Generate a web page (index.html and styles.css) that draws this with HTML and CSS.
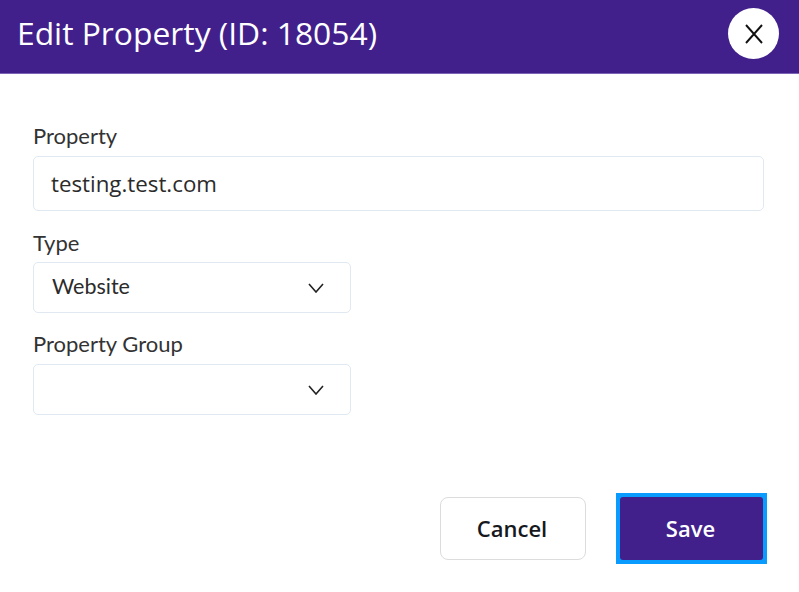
FILE: index.html
```html
<!DOCTYPE html>
<html lang="en">

<head>
    <meta charset="UTF-8">
    <title>Edit Property</title>
    <link rel="stylesheet" href="styles.css">
</head>

<body>
    <header class="modal-header">
        <h1>Edit Property (ID: 18054)</h1>
        <button type="button" class="close-btn" aria-label="Close">
            <svg width="18" height="20" viewBox="0 0 18 20"><path d="M1 1L17 19M17 1L1 19" fill="none" stroke="#111" stroke-width="1.900"/></svg>
        </button>
    </header>
    <form class="modal-body">
        <div class="form-group">
            <label>Property</label>
            <div class="text-input">testing.test.com</div>
        </div>
        <div class="form-group">
            <label>Type</label>
            <div class="select-input">
                <span>Website</span>
                <svg width="16" height="10" viewBox="0 0 16 10"><path d="M1 1L8 9L15 1" fill="none" stroke="#222" stroke-width="1.6"/></svg>
            </div>
        </div>
        <div class="form-group group-last">
            <label>Property Group</label>
            <div class="select-input">
                <span></span>
                <svg width="16" height="10" viewBox="0 0 16 10"><path d="M1 1L8 9L15 1" fill="none" stroke="#222" stroke-width="1.6"/></svg>
            </div>
        </div>
        <div class="actions">
            <button type="button" class="btn btn-cancel">Cancel</button>
            <div class="focus-ring">
                <button type="button" class="btn btn-save">Save</button>
            </div>
        </div>
    </form>
</body>

</html>
```

FILE: styles.css
```css
* {
    box-sizing: border-box;
}

body {
    margin: 0;
    background-color: #fff;
    font-family: "Open Sans", sans-serif;
    color: #2b2b2b;
}

.modal-header {
    height: 74px;
    padding: 8px 20px 0 17px;
    display: flex;
    justify-content: space-between;
    align-items: flex-start;
    background-color: #42208c;
    border-bottom: 1px solid #7d63b5;
}

h1 {
    margin: 0;
    padding-top: 4px;
    font-size: 31.800px;
    line-height: 42px;
    font-weight: 400;
    color: #fff;
}

.close-btn {
    width: 51px;
    height: 51px;
    padding: 0;
    border: none;
    border-radius: 50%;
    background: #fff;
    display: flex;
    align-items: center;
    justify-content: center;
}

.modal-body {
    padding: 49px 35px 0 33px;
}

.form-group {
    margin-bottom: 19px;
}

label {
    display: block;
    height: 33px;
    font-family: Lato, sans-serif;
    font-size: 22px;
    line-height: 26px;
    color: #333;
}

.text-input {
    height: 55px;
    padding-left: 17px;
    border: 1px solid #e0e8f1;
    border-radius: 5px;
    font-size: 22.300px;
    line-height: 54px;
}

.form-group + .form-group label {
    height: 32px;
}

.form-group.group-last label {
    line-height: 24px;
}

.select-input {
    width: 318px;
    height: 51px;
    padding: 0 26px 3px 18px;
    border: 1px solid #e0e8f1;
    border-radius: 5px;
    display: flex;
    justify-content: space-between;
    align-items: center;
    font-family: Lato, sans-serif;
    font-size: 21.5px;
}

.select-input svg {
    margin-top: 3px;
}

.actions {
    margin: 78px -3px 0 0;
    display: flex;
    justify-content: flex-end;
    align-items: center;
    gap: 30px;
}

.btn {
    height: 63px;
    padding: 0 2px 2px 0;
    font-family: "Open Sans", sans-serif;
    font-size: 22px;
    font-weight: 600;
    border-radius: 8px;
}

.btn-cancel {
    width: 146px;
    background: #fff;
    color: #16181d;
    border: 1px solid #dcdcdc;
}

.focus-ring {
    padding: 4px;
    background: #0a9bff;
    display: flex;
}

.btn-save {
    width: 143px;
    background: #42208c;
    color: #fff;
    border: none;
    border-radius: 3px;
}
```
